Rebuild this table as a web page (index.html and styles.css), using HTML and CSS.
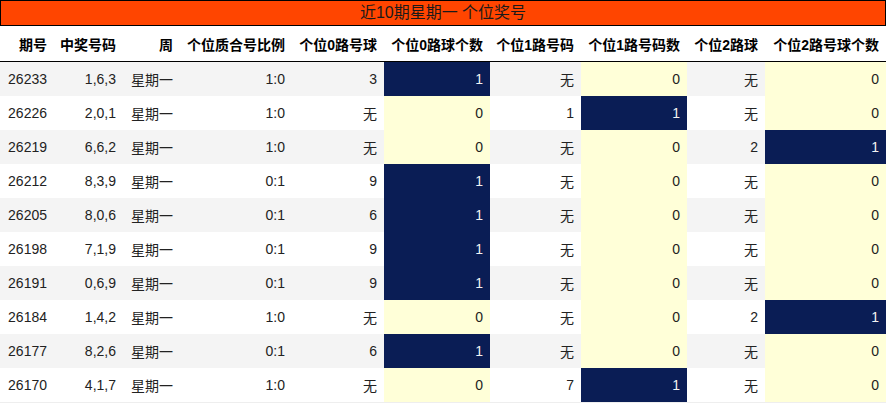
FILE: index.html
```html
<!DOCTYPE html>
<html lang="zh-CN">
<head>
<meta charset="utf-8">
<title>近10期星期一 个位奖号</title>
<link rel="stylesheet" href="styles.css">
</head>
<body>
<div class="title">近10期星期一 个位奖号</div>
<table class="grid">
<colgroup>
<col class="c1"><col class="c2"><col class="c3"><col class="c4"><col class="c5"><col class="c6"><col class="c7"><col class="c8"><col class="c9"><col class="c10">
</colgroup>
<thead>
<tr><th>期号</th><th>中奖号码</th><th>周</th><th>个位质合号比例</th><th>个位0路号球</th><th>个位0路球个数</th><th>个位1路号码</th><th>个位1路号码数</th><th>个位2路球</th><th>个位2路号球个数</th></tr>
</thead>
<tbody>
<tr><td>26233</td><td>1,6,3</td><td>星期一</td><td>1:0</td><td>3</td><td class="hit">1</td><td>无</td><td class="miss">0</td><td>无</td><td class="miss">0</td></tr>
<tr><td>26226</td><td>2,0,1</td><td>星期一</td><td>1:0</td><td>无</td><td class="miss">0</td><td>1</td><td class="hit">1</td><td>无</td><td class="miss">0</td></tr>
<tr><td>26219</td><td>6,6,2</td><td>星期一</td><td>1:0</td><td>无</td><td class="miss">0</td><td>无</td><td class="miss">0</td><td>2</td><td class="hit">1</td></tr>
<tr><td>26212</td><td>8,3,9</td><td>星期一</td><td>0:1</td><td>9</td><td class="hit">1</td><td>无</td><td class="miss">0</td><td>无</td><td class="miss">0</td></tr>
<tr><td>26205</td><td>8,0,6</td><td>星期一</td><td>0:1</td><td>6</td><td class="hit">1</td><td>无</td><td class="miss">0</td><td>无</td><td class="miss">0</td></tr>
<tr><td>26198</td><td>7,1,9</td><td>星期一</td><td>0:1</td><td>9</td><td class="hit">1</td><td>无</td><td class="miss">0</td><td>无</td><td class="miss">0</td></tr>
<tr><td>26191</td><td>0,6,9</td><td>星期一</td><td>0:1</td><td>9</td><td class="hit">1</td><td>无</td><td class="miss">0</td><td>无</td><td class="miss">0</td></tr>
<tr><td>26184</td><td>1,4,2</td><td>星期一</td><td>1:0</td><td>无</td><td class="miss">0</td><td>无</td><td class="miss">0</td><td>2</td><td class="hit">1</td></tr>
<tr><td>26177</td><td>8,2,6</td><td>星期一</td><td>0:1</td><td>6</td><td class="hit">1</td><td>无</td><td class="miss">0</td><td>无</td><td class="miss">0</td></tr>
<tr><td>26170</td><td>4,1,7</td><td>星期一</td><td>1:0</td><td>无</td><td class="miss">0</td><td>7</td><td class="hit">1</td><td>无</td><td class="miss">0</td></tr>
</tbody>
</table>
</body>
</html>
```
FILE: styles.css
```css
html, body {
  margin: 0;
  padding: 0;
  background: #ffffff;
}
body {
  width: 886px;
  font-family: "Liberation Sans", "Noto Sans CJK SC", sans-serif;
  font-size: 14px;
  color: #222222;
}
.title {
  box-sizing: border-box;
  height: 26px;
  line-height: 24px;
  border: 1px solid #000000;
  background: #ff4500;
  color: #1a1a1a;
  font-size: 16px;
  text-align: center;
}
.grid {
  width: 886px;
  border-collapse: collapse;
  table-layout: fixed;
}
.c1 { width: 54px; }
.c2 { width: 69px; }
.c3 { width: 57px; }
.c4 { width: 112px; }
.c5 { width: 92px; }
.c6 { width: 106px; }
.c7 { width: 91px; }
.c8 { width: 106px; }
.c9 { width: 78px; }
.c10 { width: 121px; }
.grid th {
  height: 35px;
  padding: 0 7px 0 0;
  text-align: right;
  font-weight: bold;
  color: #000000;
  white-space: nowrap;
  border-bottom: 1px solid #000000;
  background: #ffffff;
}
.grid td {
  height: 34px;
  padding: 0 7px 0 0;
  text-align: right;
  white-space: nowrap;
}
.grid tbody tr:nth-child(odd) td {
  background: #f4f4f4;
}
.grid tbody tr:nth-child(even) td {
  background: #ffffff;
}
.grid tbody tr:last-child td {
  border-bottom: 1px solid #eeeeee;
}
.grid tbody tr td.hit {
  background: #0a1d55;
  color: #f2f2f2;
}
.grid tbody tr td.miss {
  background: #ffffd8;
}
```
